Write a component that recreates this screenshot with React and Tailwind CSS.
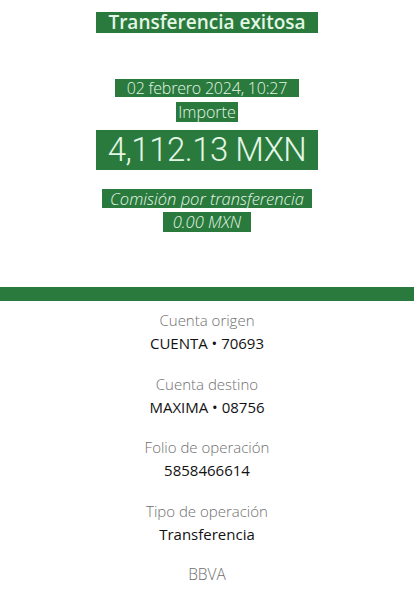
const G = 'bg-[#2a7a3e] text-[#e4f6e4]';

const details = [
  { label: 'Cuenta origen', value: 'CUENTA • 70693' },
  { label: 'Cuenta destino', value: 'MAXIMA • 08756' },
  { label: 'Folio de operación', value: '5858466614' },
  { label: 'Tipo de operación', value: 'Transferencia' },
];

export default function App() {
  return (
    <div className="w-[414px] h-[597px] bg-white overflow-hidden flex flex-col items-center" style={{ fontFamily: '"Open Sans", Lato, sans-serif' }}>
      <div className="mt-[12px] h-[21px] flex items-center">
        <span className={`${G} px-[12px] text-[19px] font-semibold leading-[21px]`}>Transferencia exitosa</span>
      </div>

      <div className="mt-[45px] h-[20px] flex items-center">
        <span className={`${G} px-[12px] text-[16px] font-light leading-[18px] tracking-[-0.2px]`}>02 febrero 2024, 10:27</span>
      </div>
      <div className="mt-[4px] h-[20px] flex items-center">
        <span className={`${G} px-[2px] text-[16px] font-light leading-[20px]`}>Importe</span>
      </div>
      <div className="mt-[8px] h-[40px] flex items-center">
        <span className={`${G} px-[12px] text-[33px] font-light leading-[40px] tracking-[-0.5px]`} style={{ fontFamily: 'Roboto, sans-serif' }}>4,112.13 MXN</span>
      </div>

      <div className="mt-[18px] h-[20px] flex items-center">
        <span className={`${G} px-[8px] text-[16.5px] italic font-light leading-[19px]`}>Comisión por transferencia</span>
      </div>
      <div className="mt-[4px] h-[20px] flex items-center">
        <span className={`${G} px-[10px] text-[16.5px] italic font-light leading-[20px]`}>0.00 MXN</span>
      </div>

      <div className="mt-[55px] w-full h-[14px] bg-[#2a7a3e]" />

      <div className="mt-[9px] flex flex-col items-center gap-[20.5px]">
        {details.map((d) => (
          <div key={d.label} className="flex flex-col items-center">
            <span className="text-[15px] leading-[20px] text-[#6f6f6f] font-light">{d.label}</span>
            <span className="mt-[3px] text-[15px] leading-[20px] text-[#121212]">{d.value}</span>
          </div>
        ))}
        <span className="text-[15.5px] leading-[20px] text-[#6f6f6f] font-light">BBVA</span>
      </div>
    </div>
  );
}
